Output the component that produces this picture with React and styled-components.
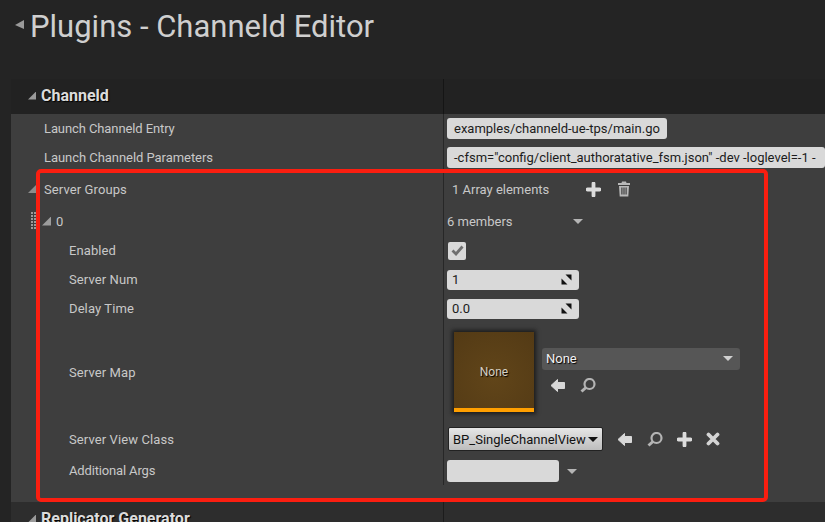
import React from 'react';
import styled, { createGlobalStyle } from 'styled-components';

const GlobalStyle = createGlobalStyle`
  html, body {
    margin: 0;
    height: 522px;
    overflow: hidden;
    background: #242424;
    font-family: Roboto, "Liberation Sans", sans-serif;
  }
`;

const Page = styled.div`
  position: relative;
  width: 825px;
  height: 522px;
  overflow: hidden;
`;

const TitleBar = styled.div`
  height: 79px;
  box-sizing: border-box;
  padding: 9px 0 0 15px;
  display: flex;
  align-items: flex-start;
  gap: 6px;
`;

const Title = styled.h1`
  margin: 0;
  font-size: 31px;
  line-height: 36px;
  font-weight: 400;
  color: #cfcfcf;
`;

const Corner = styled.span`
  flex: none;
  display: block;
  width: ${p => p.$size || 8}px;
  height: ${p => p.$size || 8}px;
  background: ${p => p.$color || '#9a9a9a'};
  clip-path: polygon(100% 0, 100% 100%, 0 100%);
`;

const TitleCorner = styled(Corner)`
  margin-top: 11px;
  clip-path: polygon(100% 0, 100% 100%, 0 55%);
`;

const Panel = styled.div`
  margin-left: 11px;
`;

const Header = styled.div`
  height: 35px;
  background: ${p => p.$bg || '#222222'};
  display: grid;
  grid-template-columns: 432px 1fr;
`;

const HeaderLabel = styled.div`
  display: flex;
  align-items: center;
  gap: 5px;
  padding: 0 0 2px 17px;
  font-size: 16px;
  font-weight: 700;
  color: #dcdcdc;
  text-shadow: 1px 1px 1px #000;
`;

const Rows = styled.div`
  background: #3e3e3e;
  padding-bottom: 17px;
`;

const Row = styled.div`
  height: ${p => p.$h}px;
  display: grid;
  grid-template-columns: 432px 1fr;
`;

const Label = styled.div`
  display: flex;
  align-items: center;
  gap: ${p => p.$gap || 8}px;
  padding-left: ${p => p.$indent}px;
  padding-bottom: ${p => p.$lift || 0}px;
  font-size: 13px;
  letter-spacing: ${p => p.$spacing ?? 0.1}px;
  color: #c8c8c8;
`;

const Value = styled.div`
  display: flex;
  align-items: center;
  padding-left: 3px;
  border-left: 1px solid ${p => p.$line || '#272727'};
  color: #c8c8c8;
  font-size: 13px;
  min-width: 0;
  overflow: hidden;
  white-space: nowrap;
`;

const Grip = styled.span`
  flex: none;
  width: 6px;
  height: 18px;
  background-image: radial-gradient(circle at 1px 1px, #9a9a9a 1px, transparent 1px);
  background-size: 3px 3px;
`;

const TextInput = styled.div`
  flex: none;
  box-sizing: border-box;
  width: ${p => p.$w}px;
  height: ${p => p.$h || 21}px;
  padding: 0 7px;
  border-radius: 3px;
  background: #d9d9d9;
  color: #1c1c1c;
  font-size: 13px;
  line-height: ${p => p.$h || 21}px;
  overflow: hidden;
`;

const NumberInput = styled(TextInput)`
  display: flex;
  align-items: center;
  justify-content: space-between;
  padding: 0 7px 0 5px;
`;

const Checkbox = styled.div`
  flex: none;
  margin-left: 1px;
  width: 18px;
  height: 18px;
  border-radius: 2px;
  background: #d9d9d9;
  display: flex;
  align-items: center;
  justify-content: center;
`;

const Muted = styled.span`
  margin-left: ${p => p.$ml || 0}px;
`;

const Thumb = styled.div`
  flex: none;
  margin-left: 7px;
  width: 80px;
  height: 80px;
  box-sizing: border-box;
  padding-top: 3px;
  background: radial-gradient(circle at 50% 60%, #614519, #533a15);
  border-bottom: 4px solid #ff9f00;
  box-shadow: 0 0 4px 2px #1c1c1c;
  display: flex;
  align-items: center;
  justify-content: center;
  color: #d6d0c4;
  font-size: 12px;
  text-shadow: 1px 1px 1px #000;
`;

const MapColumn = styled.div`
  display: flex;
  flex-direction: column;
  gap: 8px;
  margin: 0 0 4px 8px;
`;

const Combo = styled.div`
  box-sizing: border-box;
  width: 198px;
  height: 22px;
  padding: 0 7px 0 4px;
  border-radius: 3px;
  background: #565656;
  display: flex;
  align-items: center;
  justify-content: space-between;
  color: #f2f2f2;
  font-size: 13px;
  text-shadow: 1px 1px 1px #000;
`;

const IconRow = styled.div`
  display: flex;
  align-items: center;
  gap: ${p => p.$gap || 15}px;
  margin-left: ${p => p.$ml || 0}px;
`;

const ClassSelect = styled.div`
  flex: none;
  box-sizing: border-box;
  margin-left: 1px;
  width: 155px;
  height: 24px;
  padding: 0 4px;
  border: 1px solid #222;
  border-radius: 2px;
  background: linear-gradient(#e6e6e6, #bdbdbd);
  display: flex;
  align-items: center;
  justify-content: space-between;
  color: #111;
  font-size: 13px;
`;

const Caret = styled.span`
  flex: none;
  width: 0;
  height: 0;
  margin-left: ${p => p.$ml || 0}px;
  border-left: 5px solid transparent;
  border-right: 5px solid transparent;
  border-top: 5px solid ${p => p.$color || '#b5b5b5'};
`;

const Highlight = styled.div`
  position: absolute;
  left: 36px;
  top: 169px;
  width: 732px;
  height: 333px;
  box-sizing: border-box;
  border: 4px solid #fa1e10;
  border-radius: 5px;
  pointer-events: none;
`;

const Svg = styled.svg`
  flex: none;
  display: block;
`;

const PlusIcon = () => (
  <Svg width="15" height="15" viewBox="0 0 15 15">
    <path d="M7.500 1.500v12M1.500 7.500h12" stroke="#dcdcdc" strokeWidth="3.800" strokeLinecap="round" />
  </Svg>
);

const TrashIcon = () => (
  <Svg width="14" height="16" viewBox="0 0 14 16">
    <path d="M5 0.500h4l.5 1.500H13v2H1V2h3.500z" fill="#b8b8b8" />
    <path
      d="M2 5h10l-.7 10.500H2.700zM4.300 6.500v7h1.200v-7zM6.400 6.500v7h1.200v-7zM8.500 6.500v7h1.200v-7z"
      fill="#b8b8b8"
      fillRule="evenodd"
    />
  </Svg>
);

const ArrowIcon = () => (
  <Svg width="16" height="15" viewBox="0 0 16 15">
    <path
      d="M7.500 1.500V4.500H14.500V10.500H7.500V13.500L1 7.500z"
      fill="#d8d8d8"
      stroke="#d8d8d8"
      strokeLinejoin="round"
    />
  </Svg>
);

const SearchIcon = () => (
  <Svg width="16" height="15" viewBox="0 0 16 15">
    <circle cx="9.500" cy="6" r="5" fill="none" stroke="#b4b4b4" strokeWidth="2.200" />
    <path d="M6 9.500L1.500 13.500" stroke="#b4b4b4" strokeWidth="3" />
  </Svg>
);

const CrossIcon = () => (
  <Svg width="14" height="14" viewBox="0 0 14 14">
    <path d="M2.500 2.500l9 9M11.500 2.500l-9 9" stroke="#d4d4d4" strokeWidth="3.800" strokeLinecap="round" />
  </Svg>
);

const CheckIcon = () => (
  <Svg width="13" height="11" viewBox="0 0 13 11">
    <path d="M1.500 5.500L5 9l6.500-7.500" fill="none" stroke="#6f6f6f" strokeWidth="2.800" />
  </Svg>
);

const SpinIcon = () => (
  <Svg width="11" height="11" viewBox="0 0 11 11">
    <path d="M4.500 0.500h6v6zM0.500 4.500v6h6z" fill="#111" />
  </Svg>
);

export default function App() {
  return (
    <Page>
      <GlobalStyle />
      <TitleBar>
        <TitleCorner $size={9} />
        <Title>Plugins - Channeld Editor</Title>
      </TitleBar>
      <Panel>
        <Header>
          <HeaderLabel>
            <Corner />
            Channeld
          </HeaderLabel>
          <Value $line="#151515" />
        </Header>
        <Rows>
          <Row $h={29}>
            <Label $indent={33} $spacing={-0.1}>Launch Channeld Entry</Label>
            <Value>
              <TextInput $w={220}>examples/channeld-ue-tps/main.go</TextInput>
            </Value>
          </Row>
          <Row $h={29}>
            <Label $indent={33} $spacing={-0.05}>Launch Channeld Parameters</Label>
            <Value>
              <TextInput $w={378}>
                -cfsm="config/client_authoratative_fsm.json" -dev -loglevel=-1 -
              </TextInput>
            </Value>
          </Row>
          <Row $h={34}>
            <Label $indent={17}>
              <Corner $color="#8c8c8c" />
              Server Groups
            </Label>
            <Value>
              <Muted $ml={5}>1 Array elements</Muted>
              <IconRow $ml={37} $gap={16}>
                <PlusIcon />
                <TrashIcon />
              </IconRow>
            </Value>
          </Row>
          <Row $h={30}>
            <Label $indent={20} $gap={5}>
              <Grip />
              <Corner $size={9} $color="#9c9c9c" />
              <Muted>0</Muted>
            </Label>
            <Value>
              <Muted>6 members</Muted>
              <Caret $ml={60} />
            </Value>
          </Row>
          <Row $h={29}>
            <Label $indent={58}>Enabled</Label>
            <Value>
              <Checkbox>
                <CheckIcon />
              </Checkbox>
            </Value>
          </Row>
          <Row $h={29}>
            <Label $indent={58}>Server Num</Label>
            <Value>
              <NumberInput $w={132} $h={20}>
                1
                <SpinIcon />
              </NumberInput>
            </Value>
          </Row>
          <Row $h={29}>
            <Label $indent={58}>Delay Time</Label>
            <Value>
              <NumberInput $w={132} $h={20}>
                0.0
                <SpinIcon />
              </NumberInput>
            </Value>
          </Row>
          <Row $h={98}>
            <Label $indent={58}>Server Map</Label>
            <Value>
              <Thumb>None</Thumb>
              <MapColumn>
                <Combo>
                  None
                  <Caret $color="#d0d0d0" />
                </Combo>
                <IconRow $ml={8} $gap={14}>
                  <ArrowIcon />
                  <SearchIcon />
                </IconRow>
              </MapColumn>
            </Value>
          </Row>
          <Row $h={36}>
            <Label $indent={58}>Server View Class</Label>
            <Value>
              <ClassSelect>
                BP_SingleChannelView
                <Caret $color="#111" />
              </ClassSelect>
              <IconRow $ml={14} $gap={14}>
                <ArrowIcon />
                <SearchIcon />
                <PlusIcon />
                <CrossIcon />
              </IconRow>
            </Value>
          </Row>
          <Row $h={28}>
            <Label $indent={58} $spacing={-0.15} $lift={2}>Additional Args</Label>
            <Value>
              <TextInput $w={112} $h={22} />
              <Caret $ml={8} />
            </Value>
          </Row>
        </Rows>
        <Header $bg="#2d2d2d">
          <HeaderLabel>
            <Corner />
            Replicator Generator
          </HeaderLabel>
          <Value $line="#1c1c1c" />
        </Header>
      </Panel>
      <Highlight />
    </Page>
  );
}
